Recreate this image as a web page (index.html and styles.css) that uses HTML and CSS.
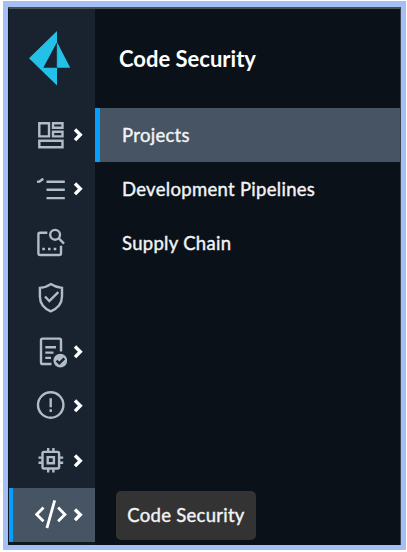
FILE: index.html
```
<!DOCTYPE html>
<html lang="en">
<head>
<meta charset="utf-8">
<title>Code Security</title>
<link rel="stylesheet" href="styles.css">
</head>
<body>
<div class="frame">
<div class="app">
  <nav class="rail">
    <div class="brand">
      <svg class="logo" width="42" height="56" viewBox="29 30 42 56"><path fill="#23c1e8" d="M57 31 29 58.3 57 85.4V67.7H43.3L56.4 43.3V67.7H70.2L57 42Z"/><path stroke="#19232f" stroke-width=".8" d="M56.6 43V68"/></svg>
    </div>
    <a class="item"><svg class="icon" viewBox="0 0 32 32"><path d="M4.3 4.2H14V17.4H4.3ZM18 4.2H27.5V8.8H18ZM18 12.8H27.5V17.4H18ZM4.3 21.7H27.5V28.3H4.3Z"/></svg><svg class="chevron" viewBox="0 0 14 16"><path d="m4 2.5 5.3 5.3L4 13.1"/></svg></a>
    <a class="item"><svg class="icon" viewBox="0 0 32 32"><path d="M11.5 8.8H29.8M11.5 16.8H29.8M11.5 25.1H29.8M2 8.9 4.5 8.5 8.3 5.7"/></svg><svg class="chevron" viewBox="0 0 14 16"><path d="m4 2.5 5.3 5.3L4 13.1"/></svg></a>
    <a class="item"><svg class="icon" viewBox="0 0 32 32"><path d="M12.3 5.8H5Q3.4 5.8 3.4 7.4V26.4Q3.4 28 5 28H24.4Q26 28 26 26.4V18.8M23.8 11.4 29 16.6"/><circle cx="20.1" cy="7.8" r="4.9"/><path class="solid" d="M7.3 20.7h2.6v2.6H7.3zM13 20.7h2.6v2.6H13zM18.7 20.7h2.6v2.6h-2.6z"/></svg></a>
    <a class="item"><svg class="icon" viewBox="0 0 32 32"><path d="M15.7 2.1Q11.5 5.2 4.9 5.9V14.5Q5 24.8 15.7 29.3Q26.8 24.8 27 14.5V5.9Q20.2 5.2 15.7 2.1ZM10 14.5 14.3 19 23.3 10.2"/></svg></a>
    <a class="item"><svg class="icon" viewBox="0 0 32 32"><path d="M16.5 28H7.6Q6 28 6 26.4V4.2Q6 2.6 7.6 2.6H24.4Q26 2.6 26 4.2V15.5M10.3 11.3H21M10.3 16.6H18.5M10.3 21.9H16"/><circle class="solid" cx="25.3" cy="24.6" r="6.9"/><path class="cut" d="m21.6 24.6 2.7 2.7 5-5"/></svg><svg class="chevron" viewBox="0 0 14 16"><path d="m4 2.5 5.3 5.3L4 13.1"/></svg></a>
    <a class="item"><svg class="icon" viewBox="0 0 32 32"><circle cx="15.7" cy="15" r="12.7"/><path d="M15.7 8.2V17.2M15.7 19.3V22"/></svg><svg class="chevron" viewBox="0 0 14 16"><path d="m4 2.5 5.3 5.3L4 13.1"/></svg></a>
    <a class="item"><svg class="icon" viewBox="0 0 32 32"><rect x="7.5" y="6.9" width="16.6" height="16.6" rx="1.5"/><path d="M12.7 12.1H18.9V18.3H12.7ZM13.2 3V7M18.4 3V7M13.2 23.5V27.5M18.4 23.5V27.5M3.5 12.6H7.5M3.5 17.8H7.5M24 12.6H28.2M24 17.8H28.2"/></svg><svg class="chevron" viewBox="0 0 14 16"><path d="m4 2.5 5.3 5.3L4 13.1"/></svg></a>
    <a class="item active"><svg class="icon" viewBox="0 0 32 32"><path d="m8.5 8.6-6.8 6.8 6.8 6.8M19.7 1.4 11.9 29M23.1 8.6 29.9 15.4 23.1 22.2"/></svg><svg class="chevron" viewBox="0 0 14 16"><path d="m4 2.5 5.3 5.3L4 13.1"/></svg><span class="tooltip">Code Security</span></a>
  </nav>
  <section class="panel">
    <h1 class="title">Code Security</h1>
    <a class="link selected">Projects</a>
    <a class="link">Development Pipelines</a>
    <a class="link">Supply Chain</a>
  </section>
</div>
</div>
</body>
</html>
```
FILE: styles.css
```
* { box-sizing: border-box; }
body {
  margin: 0;
  background: #fff;
  font-family: Lato, "Liberation Sans", sans-serif;
  color: #f2f3f5;
  overflow: hidden;
}
.frame {
  width: 403px;
  height: 549px;
  margin: 1px 0 0 3px;
  border: 5px solid #a4bff3;
  border-top-width: 6px;
}
.app {
  display: flex;
  height: 538px;
  border-top: 2px solid #4b4f56;
  border-left: 1px solid #101923;
  border-right: 1px solid #38434d;
  background: #0a1118;
}
.rail { width: 86px; background: #19232f; border-bottom: 3px solid #101820; }
.brand { height: 98.6px; padding: 21px 0 0 20px; }
.logo { display: block; }
.item {
  position: relative;
  display: flex;
  align-items: center;
  height: 54.3px;
  padding-left: 26px;
}
.icon {
  width: 32px;
  height: 32px;
  flex: none;
  fill: none;
  stroke: #b1bcc8;
  stroke-width: 2.4;
}
.icon .solid { fill: #b1bcc8; stroke: none; }
.icon .cut { stroke: #19232f; }
.chevron {
  width: 14px;
  height: 16px;
  flex: none;
  margin-left: 4px;
  fill: none;
  stroke: #fff;
  stroke-width: 3.4;
}
.active { background: #465464; box-shadow: inset 4px 0 #069fff; }
.active .icon { stroke: #fff; stroke-width: 2.8; }
.tooltip {
  position: absolute;
  left: 107px;
  top: 3px;
  width: 140px;
  height: 49px;
  border-radius: 5px;
  background: #333;
  font-size: 18.5px;
  letter-spacing: .27px;
  -webkit-text-stroke: .4px;
  line-height: 48px;
  text-align: center;
  white-space: nowrap;
}
.panel { flex: 1; }
.title {
  height: 98.6px;
  margin: 0;
  padding-left: 24px;
  font-size: 22px;
  font-weight: 700;
  line-height: 99px;
  color: #fff;
}
.link {
  display: block;
  height: 54.3px;
  padding-left: 27px;
  font-size: 18.5px;
  letter-spacing: .3px;
  -webkit-text-stroke: .4px;
  line-height: 55px;
}
.selected { background: #465464; box-shadow: inset 5px 0 #069fff; }
```
